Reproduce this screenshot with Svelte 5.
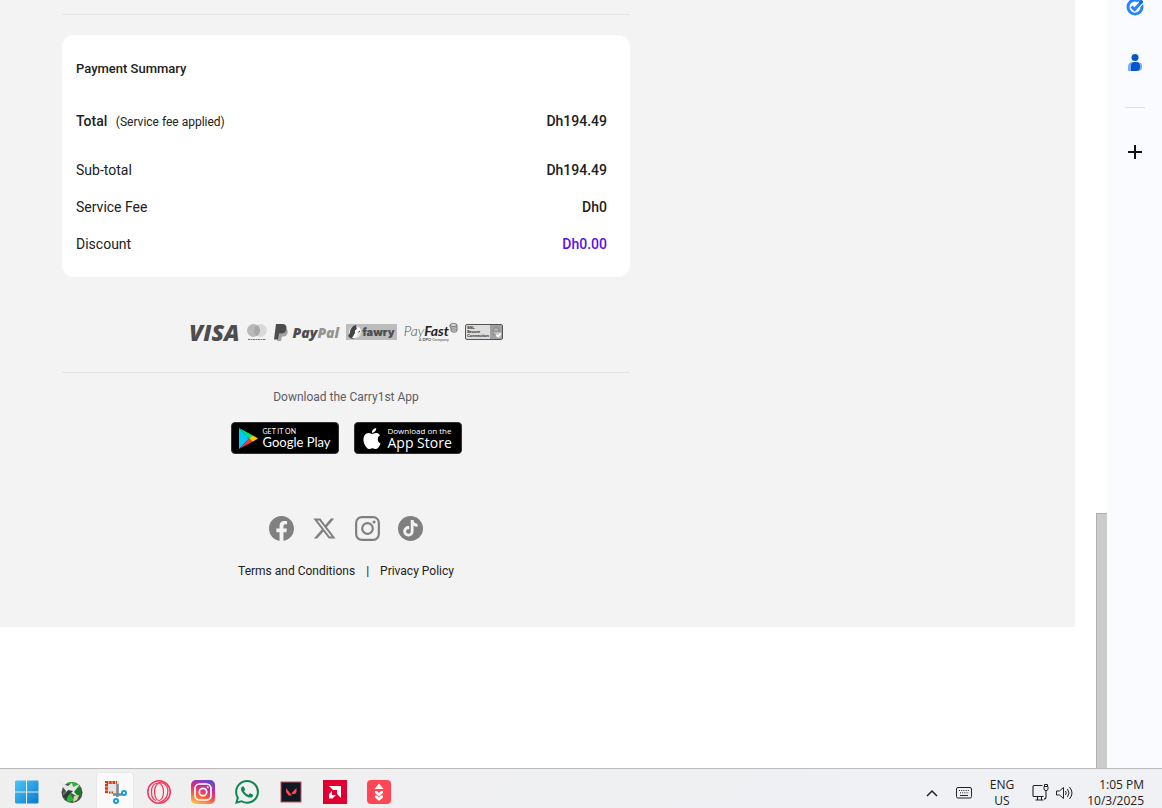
<script>
  const currency = "Dh";

  let total = "194.49";
  let rows = [
    { label: "Sub-total", value: "194.49" },
    { label: "Service Fee", value: "0" },
    { label: "Discount", value: "0.00", highlight: true },
  ];

  let socials = [
    {
      name: "Facebook",
      path: "M24 12.073c0-6.627-5.373-12-12-12s-12 5.373-12 12c0 5.99 4.388 10.954 10.125 11.854v-8.385H7.078v-3.47h3.047V9.43c0-3.007 1.792-4.669 4.533-4.669 1.312 0 2.686.235 2.686.235v2.953H15.83c-1.491 0-1.956.925-1.956 1.874v2.25h3.328l-.532 3.47h-2.796v8.385C19.612 23.027 24 18.062 24 12.073z",
    },
    {
      name: "X",
      box: "-1.5 -1.5 27 27",
      path: "M18.901 1.153h3.68l-8.04 9.19L24 22.846h-7.406l-5.8-7.584-6.638 7.584H.474l8.6-9.83L0 1.154h7.594l5.243 6.932ZM17.61 20.644h2.039L6.486 3.24H4.298Z",
    },
    { name: "Instagram" },
    { name: "TikTok" },
  ];
</script>

<div class="desktop">
  <div class="browser">
    <main class="page">
      <div class="content">
        <hr />

        <section class="summary">
          <h2>Payment Summary</h2>
          <div class="row total">
            <span><b>Total</b> <small>(Service fee applied)</small></span>
            <strong>{currency}{total}</strong>
          </div>
          {#each rows as row (row.label)}
            <div class="row">
              <span>{row.label}</span>
              <strong class:highlight={row.highlight}>{currency}{row.value}</strong>
            </div>
          {/each}
        </section>

        <div class="payments">
          <span class="visa">VISA</span>
          <svg class="mastercard" viewBox="0 0 20 17" role="img" aria-label="Mastercard">
            <circle cx="6.5" cy="6.5" r="6.5" fill="#b9b9b9" />
            <circle cx="13.5" cy="6.5" r="6.5" fill="#dadada" />
            <path d="M10 1a6.5 6.5 0 0 1 0 11a6.5 6.5 0 0 1 0-11z" fill="#a8a8a8" />
            <path d="M1 15.5h18" stroke="#777" stroke-dasharray="2 .5" />
          </svg>
          <span class="paypal">
            <svg viewBox="0 0 14 17" aria-hidden="true">
              <path d="M5 5h7.500q2 2 .8 5-1.200 2.500-4 2.500H8L7 17H3z" fill="#a3a3a3" />
              <path d="M2 0h6.500q4 .2 4 4 0 5.500-6 5.500H5L4 15.500H0z" fill="#4d4d4d" />
            </svg>
            <b>Pay<i>Pal</i></b>
          </span>
          <span class="fawry">
            <svg viewBox="0 0 14 14" aria-hidden="true">
              <circle cx="7" cy="7" r="6" fill="#e8e8e8" />
              <path d="M8 0C4 1 2 4 2 8L0 11q2 3 5 3c2-2 3-4 3-6l4-1V4L9 5z" fill="#444" />
              <path d="M11 2 7 5.500 7 8 4 13q5 1 6-6l3-2z" fill="#fff" />
            </svg>
            <b>fawry</b>
          </span>
          <span class="payfast">
            <span class="payfast-name">Pay<b>Fast</b></span>
            <span class="payfast-note">A <b>DPO</b> Company</span>
            <svg viewBox="0 0 9 10" aria-hidden="true">
              <g fill="#ddd" stroke="#777">
                <path d="M2 6v2c1 1.500 5 1.500 6 0V6M2 4v2c1 1.500 5 1.500 6 0V4" />
                <path d="M1 2v2c1 1.500 6 1.500 7 0V2" />
                <ellipse cx="4.500" cy="2" rx="3.500" ry="1.500" />
              </g>
            </svg>
          </span>
          <span class="ssl">
            <span>SSL<br />Secure<br />Connection</span>
            <svg viewBox="0 0 12 14" aria-hidden="true">
              <path d="M0 0h12v14H0z" fill="#a0a0a0" />
              <path d="M3 6V4q3-3 6 0v2M3 6h6v4H3z" fill="#b5b5b5" stroke="#888" />
              <circle cx="8.500" cy="10" r="2.800" fill="#ccc" />
              <path d="m6.500 10 1.500 1.500 3-3.500" fill="none" stroke="#fff" stroke-width="1.200" />
            </svg>
          </span>
        </div>

        <hr />

        <footer>
          <p>Download the Carry1st App</p>
          <div class="stores">
            <a class="store google" href="#google-play">
              <svg viewBox="0 0 19 21" aria-hidden="true">
                <path d="M0 0v21l10-10.500z" fill="#00c8f8" />
                <path d="M0 0 13.500 7.200 10 10.500z" fill="#00e676" />
                <path d="m13.500 7.200 5.500 3.300-5.500 3.300L10 10.500z" fill="#ffc700" />
                <path d="M0 21 13.500 13.800 10 10.500z" fill="#f73448" />
              </svg>
              <span><small>GET IT ON</small>Google Play</span>
            </a>
            <a class="store apple" href="#app-store">
              <svg viewBox="1 0 22 24" aria-hidden="true">
                <path
                  fill="#fff"
                  d="M12.152 6.896c-.948 0-2.415-1.078-3.960-1.040-2.040.027-3.910 1.183-4.961 3.014-2.117 3.675-.546 9.103 1.519 12.090 1.013 1.454 2.208 3.090 3.792 3.039 1.520-.065 2.090-.987 3.935-.987 1.831 0 2.350.987 3.960.948 1.637-.026 2.676-1.480 3.676-2.948 1.156-1.688 1.636-3.325 1.662-3.415-.039-.013-3.182-1.221-3.220-4.857-.026-3.040 2.480-4.494 2.597-4.559-1.429-2.090-3.623-2.324-4.390-2.376-2-.156-3.675 1.090-4.610 1.090zM15.530 3.830c.843-1.012 1.400-2.427 1.245-3.830-1.207.052-2.662.805-3.532 1.818-.780.896-1.454 2.338-1.273 3.714 1.338.104 2.715-.688 3.559-1.701"
                />
              </svg>
              <span><small>Download on the</small>App Store</span>
            </a>
          </div>

          <div class="socials">
            {#each socials as social (social.name)}
              <a href="#{social.name}" aria-label={social.name}>
                <svg viewBox={social.box || "0 0 24 24"}>
                  {#if social.path}
                    <path d={social.path} fill="currentColor" />
                  {:else if social.name == "Instagram"}
                    <g fill="none" stroke="currentColor" stroke-width="2.100">
                      <rect x="1.100" y="1.100" width="21.800" height="21.800" rx="5.500" />
                      <circle cx="12" cy="12" r="5.100" />
                    </g>
                    <circle cx="18.300" cy="5.700" r="1.500" fill="currentColor" />
                  {:else}
                    <circle cx="12" cy="12" r="12" fill="currentColor" />
                    <path
                      transform="translate(4 3.800) scale(.66)"
                      fill="#f3f3f3"
                      d="M12.525.02c1.310-.02 2.610-.01 3.910-.02.08 1.530.63 3.090 1.750 4.170 1.120 1.110 2.700 1.620 4.240 1.790v4.030c-1.440-.05-2.890-.35-4.200-.97-.57-.26-1.100-.59-1.620-.93-.01 2.920.01 5.840-.02 8.750-.08 1.400-.54 2.790-1.350 3.940-1.310 1.920-3.580 3.170-5.910 3.210-1.430.08-2.860-.31-4.080-1.030-2.020-1.190-3.440-3.370-3.650-5.710-.02-.5-.03-1-.01-1.490.18-1.900 1.120-3.720 2.580-4.960 1.660-1.440 3.980-2.130 6.150-1.720.02 1.480-.04 2.960-.04 4.440-.99-.32-2.150-.23-3.020.37-.63.41-1.110 1.040-1.360 1.750-.21.51-.15 1.070-.14 1.610.24 1.640 1.820 3.020 3.500 2.870 1.120-.01 2.190-.66 2.770-1.610.19-.33.4-.67.41-1.060.1-1.790.06-3.570.07-5.360.01-4.030-.01-8.050.02-12.070z"
                    />
                  {/if}
                </svg>
              </a>
            {/each}
          </div>

          <nav class="legal">
            <a href="#terms">Terms and Conditions</a>
            <span>|</span>
            <a href="#privacy">Privacy Policy</a>
          </nav>
        </footer>
      </div>
    </main>

    <div class="scrollbar"><div class="thumb"></div></div>

    <aside class="side-panel">
      <button class="tasks" aria-label="Tasks">
        <svg width="20" height="16" viewBox="0 0 20 16">
          <circle cx="10" cy="7" r="7" fill="none" stroke="#2684fc" stroke-width="3" />
          <path d="m6.500 6.500 3 3L17 1.500" fill="none" stroke="#f9fbff" stroke-width="5" />
          <path d="m6.500 6.500 3 3L15.500 3" fill="none" stroke="#2684fc" stroke-width="3" />
          <circle cx="16" cy="2" r="2" fill="#0066da" />
        </svg>
      </button>
      <button class="contacts" aria-label="Contacts">
        <svg width="14" height="17" viewBox="0 0 14 17">
          <circle cx="7" cy="3.500" r="3.500" fill="#0057cc" />
          <path d="M0 17v-4q0-5 5-5h4q5 0 5 4v1q0 4-4 4z" fill="#7baaf7" />
          <path d="M3 17v-5q0-4 4-4 5 0 5 4v1q0 4-4 4z" fill="#0057cc" />
        </svg>
      </button>
      <hr />
      <button class="add-ons" aria-label="Get Add-ons">
        <svg width="14" height="14" viewBox="0 0 14 14">
          <path d="M7 0v14M0 7h14" stroke="#111" stroke-width="2" />
        </svg>
      </button>
    </aside>
  </div>

  <div class="taskbar">
    <div class="apps">
      <button aria-label="Start">
        <svg viewBox="0 0 24 24">
          <defs>
            <linearGradient id="win" x1="0" y1="0" x2="1" y2="1">
              <stop offset="0" stop-color="#4cc8f4" />
              <stop offset="1" stop-color="#0a78d0" />
            </linearGradient>
          </defs>
          <path d="M0 1.500 1 .5h10v11H0zM12 .5h11l.5 1v10H12zM0 12.500h11v11H1l-1-1zM12 12.500h11.500v10l-1 1H12z" fill="url(#win)" />
        </svg>
      </button>
      <button aria-label="Xbox tool">
        <svg viewBox="0 0 24 24">
          <circle cx="13" cy="12.500" r="10.500" fill="#4c514e" />
          <path d="M8 3q8-3 13 4l-4 2-4-3zM4 13l6-1 5 8-5 2q-5-2-6-9z" fill="#25b934" />
          <path d="M15 9q7-2 7 5l-5 7-3-4z" fill="#16801e" />
          <path d="m0 2 9 4 4-3 1 4 7-3-6 8 5 5-8-4-7 6 2-8z" fill="#e4e8e5" />
          <path d="m4 16 5-6 5 1-5 5-2 5z" fill="#333b36" />
          <path d="m15 16 5-1-2 5-4 2z" fill="#d9d6a5" />
        </svg>
      </button>
      <button class="active" aria-label="Snipping Tool">
        <svg viewBox="0 0 24 24">
          <path d="M2 1h14v13H2z" fill="#e4e4e4" />
          <path d="M3.500 13V2.500H14" fill="none" stroke="#d83b01" stroke-width="3" stroke-dasharray="2.500 .8" />
          <path d="M6 12.500h4" stroke="#d83b01" stroke-width="2" stroke-dasharray="1.500 1" />
          <path d="M14.500 4v13M10 14.500h9" fill="none" stroke="#7c858d" stroke-width="2.500" />
          <circle cx="21" cy="13" r="2" fill="#fff" stroke="#189bdc" stroke-width="2" />
          <circle cx="13" cy="21" r="2" fill="#fff" stroke="#189bdc" stroke-width="2" />
        </svg>
      </button>
      <button aria-label="Opera">
        <svg viewBox="0 0 24 24">
          <g fill="none" stroke="#fa2f55">
            <circle cx="12" cy="12" r="11.200" stroke-width="1.500" />
            <ellipse cx="12" cy="12" rx="4.500" ry="8.500" stroke-width="1.200" />
            <path d="M9 3.500C18 0 22 7 20.500 14Q19 21 12 22.500M9 3.500C3 5 3 19 9 20.500" stroke-width="1.200" />
          </g>
        </svg>
      </button>
      <button aria-label="Instagram">
        <svg viewBox="0 0 24 24">
          <defs>
            <linearGradient id="insta" x1=".2" y1="1" x2=".6" y2="0">
              <stop offset="0" stop-color="#ffc34d" />
              <stop offset=".35" stop-color="#f56040" />
              <stop offset=".65" stop-color="#d52c87" />
              <stop offset="1" stop-color="#6845d0" />
            </linearGradient>
          </defs>
          <rect width="24" height="24" rx="5" fill="url(#insta)" />
          <rect x="4" y="4" width="16" height="16" rx="4.500" fill="none" stroke="#fff" stroke-width="1.700" />
          <circle cx="12" cy="12" r="3.700" fill="none" stroke="#fff" stroke-width="1.700" />
          <circle cx="16.700" cy="7.300" r="1" fill="#fff" />
        </svg>
      </button>
      <button aria-label="WhatsApp">
        <svg viewBox="0 0 24 24">
          <path
            fill="#118653"
            d="M17.472 14.382c-.297-.149-1.758-.867-2.030-.967-.273-.099-.471-.148-.670.150-.197.297-.767.966-.940 1.164-.173.199-.347.223-.644.075-.297-.150-1.255-.463-2.390-1.475-.883-.788-1.480-1.761-1.653-2.059-.173-.297-.018-.458.130-.606.134-.133.298-.347.446-.520.149-.174.198-.298.298-.497.099-.198.050-.371-.025-.520-.075-.149-.669-1.612-.916-2.207-.242-.579-.487-.500-.669-.510-.173-.008-.371-.010-.570-.010-.198 0-.520.074-.792.372-.272.297-1.040 1.016-1.040 2.479 0 1.462 1.065 2.875 1.213 3.074.149.198 2.096 3.200 5.077 4.487.709.306 1.262.489 1.694.625.712.227 1.360.195 1.871.118.571-.085 1.758-.719 2.006-1.413.248-.694.248-1.289.173-1.413-.074-.124-.272-.198-.570-.347m-5.421 7.403h-.004a9.870 9.870 0 01-5.031-1.378l-.361-.214-3.741.982.998-3.648-.235-.374a9.860 9.860 0 01-1.510-5.260c.001-5.450 4.436-9.884 9.888-9.884 2.640 0 5.122 1.030 6.988 2.898a9.825 9.825 0 012.893 6.994c-.003 5.450-4.437 9.884-9.885 9.884m8.413-18.297A11.815 11.815 0 0012.050 0C5.495 0 .160 5.335.157 11.892c0 2.096.547 4.142 1.588 5.945L.057 24l6.305-1.654a11.882 11.882 0 005.683 1.448h.005c6.554 0 11.890-5.335 11.893-11.893a11.821 11.821 0 00-3.480-8.413z"
          />
        </svg>
      </button>
      <button aria-label="Valorant">
        <svg viewBox="0 0 24 24">
          <rect x="2" y="2" width="20" height="20" fill="#101823" stroke="#c8505c" />
          <path d="m7 8 6 7.500h-3.500L7 12zM17.500 8v4l-1.500 2h-3l-.5-1z" fill="#ff4655" />
        </svg>
      </button>
      <button aria-label="AMD Software">
        <svg viewBox="0 0 24 24">
          <path d="M0 0h24v24H0z" fill="#df0031" />
          <path d="M6 6h12v12l-4-4v-4h-4zM9 11v4h4l-3.500 3.500H6V14z" fill="#fff" />
        </svg>
      </button>
      <button aria-label="Game launcher">
        <svg viewBox="0 0 24 24">
          <rect width="24" height="24" rx="4" fill="#ff4655" />
          <path d="m12 3.500 4.500 5.500h-9zM8 11h2l2 2 2-2h2v2l-4 3.500L8 13zM8 15.500h2l2 2 2-2h2v2L12 21l-4-3.500z" fill="#fff" />
        </svg>
      </button>
    </div>

    <div class="tray">
      <div class="tray-icons">
        <button aria-label="Show hidden icons">
          <svg width="12" height="16" viewBox="0 0 12 16"><path d="m1 11 5-5 5 5" fill="none" stroke="#222" stroke-width="1.500" /></svg>
        </button>
        <button aria-label="Touch keyboard">
          <svg width="16" height="12" viewBox="0 0 16 12">
            <rect x=".5" y=".5" width="15" height="10.500" rx="1.500" fill="none" stroke="#222" />
            <path d="M3 3.500h10M4 5.800h9" stroke="#222" stroke-dasharray="1 1.200" />
            <path d="M4 8.500h8" stroke="#222" />
          </svg>
        </button>
        <button>ENG<br />US</button>
        <button class="system" aria-label="Network and volume">
          <svg width="17" height="17" viewBox="0 0 17 17">
            <path d="M10.500 1.500H2q-1 0-1 1v9q0 1 1 1h9.500M5.500 12.500V16M9.500 12.500V16M3.500 16h8M14 6v7q0 2-2 2" fill="none" stroke="#222" stroke-width="1.100" />
            <path d="M12 2.500h4V5q0 1.500-2 1.500T12 5zM12.500 2.500v-2h3v2" fill="none" stroke="#222" />
          </svg>
          <svg width="17" height="14" viewBox="0 0 17 14">
            <g fill="none" stroke="#222">
              <path d="M.5 5v4h3l4 3.500v-11L3.500 5z" />
              <path d="M9.500 5q1.500 2 0 4M11.500 3q3 4 0 8M13.500 1q5 6 0 12" />
            </g>
          </svg>
        </button>
      </div>
      <button class="clock">1:05 PM<br />10/3/2025</button>
    </div>
  </div>
</div>

<style>
  :global(body) {
    margin: 0;
    font-family: Roboto, sans-serif;
  }

  .desktop {
    display: flex;
    flex-direction: column;
    min-height: 100vh;
    color: #212121;
    background: #fff;
  }

  .browser {
    display: flex;
    flex: 1;
  }

  button {
    display: flex;
    align-items: center;
    justify-content: center;
    border: none;
    background: none;
    padding: 0;
    color: inherit;
    font: inherit;
    cursor: pointer;
  }

  svg {
    display: block;
    flex: none;
  }

  hr {
    width: 100%;
    height: 1px;
    margin: 0;
    border: none;
    background: #e5e5e5;
  }

  a {
    color: inherit;
    text-decoration: none;
  }

  .page {
    flex: 1;
    align-self: flex-start;
    box-sizing: border-box;
    background: #f3f3f3;
    padding: 14px 62px 48px;
  }

  .content {
    max-width: 568px;
  }

  .summary {
    box-sizing: border-box;
    margin-top: 20px;
    padding: 24px 23px 15px 14px;
    border-radius: 12px;
    background: #fff;
    font-size: 14px;
  }

  .summary h2 {
    margin: 0 0 30px;
    font-size: 13px;
    line-height: 20px;
    font-weight: 500;
  }

  .row {
    display: flex;
    justify-content: space-between;
    align-items: center;
    height: 37px;
  }

  .row.total {
    height: 24px;
    margin-bottom: 18px;
  }

  .row b,
  .row strong {
    font-weight: 500;
  }

  .row small {
    margin-left: 5px;
    font-size: 12px;
  }

  .row .highlight {
    color: #5b0eeb;
  }

  .payments {
    display: flex;
    align-items: center;
    justify-content: center;
    gap: 7px;
    height: 30px;
    margin: 40px 0 25px;
    color: #4d4d4d;
    white-space: nowrap;
  }

  .visa {
    font: italic 800 23px "Open Sans", sans-serif;
  }

  .mastercard {
    width: 20px;
    height: 17px;
  }

  .paypal {
    display: flex;
    align-items: center;
    gap: 5px;
    font: italic 700 14px "Open Sans", sans-serif;
  }

  .paypal svg {
    width: 14px;
    height: 17px;
  }

  .paypal i {
    color: #939393;
  }

  .fawry {
    display: flex;
    align-items: center;
    height: 16px;
    padding: 0 2px;
    background: #bcbcbc;
    font: 800 11px Inter, sans-serif;
  }

  .fawry svg {
    width: 14px;
    height: 14px;
  }

  .payfast {
    display: grid;
    grid-template-columns: auto 9px;
  }

  .payfast-name {
    font: italic 300 14px/15px Lato, sans-serif;
  }

  .payfast-name b {
    color: #222;
    font-weight: 700;
  }

  .payfast-note {
    grid-row: 2;
    text-align: right;
    font: 4px/4px Lato, sans-serif;
  }

  .payfast svg {
    width: 9px;
    height: 10px;
  }

  .ssl {
    display: flex;
    justify-content: space-between;
    box-sizing: border-box;
    width: 38px;
    height: 16px;
    border: 1px solid #555;
    border-radius: 2px;
    background: #ddd;
    color: #222;
    overflow: hidden;
  }

  .ssl span {
    padding: 1px;
    font: 700 4px/4px "Liberation Sans", sans-serif;
  }

  .ssl svg {
    width: 12px;
    height: 14px;
  }

  footer {
    display: flex;
    flex-direction: column;
    align-items: center;
    font-size: 12px;
  }

  footer p {
    margin: 14px 0 15px;
    line-height: 20px;
    color: #5c5c66;
  }

  .stores {
    display: flex;
    gap: 15px;
  }

  .store {
    display: flex;
    align-items: center;
    box-sizing: border-box;
    width: 108px;
    height: 32px;
    padding-left: 7px;
    border: 1px solid #333;
    border-radius: 4px;
    background: #000;
    color: #fff;
    white-space: nowrap;
  }

  .store small {
    display: block;
    font-size: 7px;
    line-height: 8px;
  }

  .google {
    gap: 5px;
    font: 13px/15px Lato, sans-serif;
  }

  .google svg {
    width: 19px;
    height: 21px;
  }

  .apple {
    gap: 6px;
    font: 14px/15px "Open Sans", sans-serif;
  }

  .apple small {
    font-size: 8px;
  }

  .apple svg {
    width: 20px;
    height: 21px;
  }

  .socials {
    display: flex;
    gap: 18px;
    margin: 62px 0 22px;
    color: #808080;
  }

  .socials svg {
    width: 25px;
    height: 25px;
  }

  .legal {
    display: flex;
    gap: 11px;
    line-height: 16px;
  }

  .scrollbar {
    display: flex;
    flex-direction: column;
    justify-content: flex-end;
    width: 11px;
    margin-left: 21px;
  }

  .thumb {
    box-sizing: border-box;
    height: 33.2%;
    border: solid #b0b0b0;
    border-width: 1px 0 0 1px;
    background: #cbcbcb;
  }

  .side-panel {
    display: flex;
    flex-direction: column;
    align-items: center;
    width: 55px;
    background: #f9fbff;
  }

  .contacts {
    margin: 38px 0 36px;
  }

  .side-panel hr {
    width: 20px;
    background: #dedfe2;
  }

  .add-ons {
    margin-top: 37px;
  }

  .taskbar {
    display: flex;
    justify-content: space-between;
    box-sizing: border-box;
    height: 40px;
    border-top: 1px solid #b9b9bb;
    padding: 0 18px 0 8px;
    background: linear-gradient(90deg, #efefef, #eff1f5);
    font: 12px/16px "Open Sans", sans-serif;
    overflow: hidden;
  }

  .apps {
    display: flex;
    gap: 6px;
    padding-top: 3px;
  }

  .apps button {
    box-sizing: border-box;
    width: 38px;
    height: 40px;
    border: 1px solid transparent;
    border-radius: 4px;
  }

  .apps .active {
    border-color: #e8e8e8;
    background: #fafafa;
  }

  .apps svg {
    width: 24px;
    height: 24px;
  }

  .tray {
    display: flex;
    align-items: center;
    gap: 14px;
    height: 47px;
  }

  .tray-icons {
    display: flex;
    align-items: center;
    gap: 18px;
  }

  .system {
    gap: 7px;
  }

  .clock {
    text-align: right;
  }
</style>
